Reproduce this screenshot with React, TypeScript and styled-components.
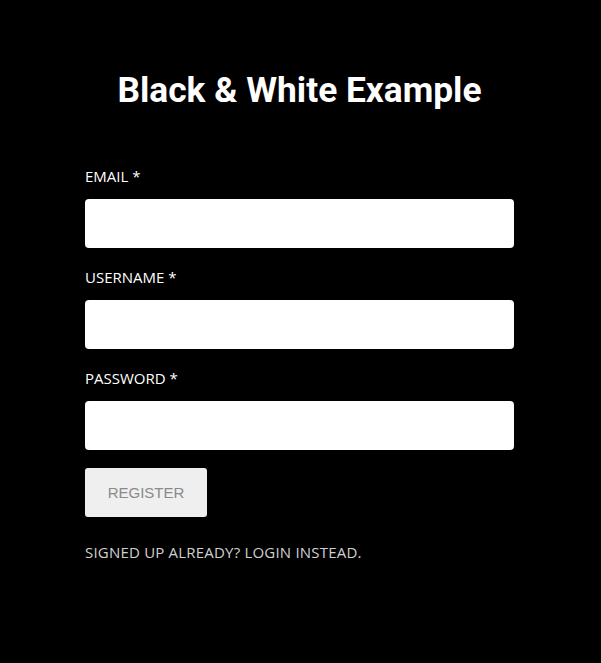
import React, { FC } from "react";
import styled, { createGlobalStyle } from "styled-components";

const GlobalStyle = createGlobalStyle`
  html, body {
    margin: 0;
    padding: 0;
    background: #000;
  }
  body {
    font-family: "Open Sans", "Liberation Sans", sans-serif;
  }
`;

const Page = styled.div`
  min-height: 663px;
  background: #000;
  display: flex;
  justify-content: center;
  padding-right: 2px;
`;

const Form = styled.form`
  width: 429px;
  padding-top: 70px;
  display: flex;
  flex-direction: column;
`;

const Title = styled.h1`
  margin: 0 0 56px;
  font-family: Roboto, "Liberation Sans", sans-serif;
  font-weight: 700;
  font-size: 35.3px;
  line-height: 40px;
  color: #fff;
  text-align: center;
`;

const Field = styled.div`
  display: flex;
  flex-direction: column;
  margin-bottom: 19px;
`;

const Label = styled.label`
  font-size: 15px;
  line-height: 20px;
  color: #fff;
  margin-bottom: 13px;
`;

const Input = styled.input`
  box-sizing: border-box;
  height: 49px;
  width: 100%;
  border: none;
  border-radius: 4px;
  background: #fff;
  padding: 0 12px;
  font-size: 16px;
  outline: none;
`;

const Button = styled.button`
  align-self: flex-start;
  width: 122px;
  height: 49px;
  margin-top: -1px;
  border: none;
  border-radius: 3px;
  background: #efefef;
  color: #8a8a8a;
  font-family: Arial, "Liberation Sans", sans-serif;
  font-size: 15px;
  cursor: pointer;
`;

const SwitchLink = styled.a`
  margin-top: 25px;
  font-size: 15px;
  line-height: 20px;
  letter-spacing: 0.2px;
  color: #d0d0d0;
  text-decoration: none;
  cursor: pointer;
`;

const fields = [
  { id: "email", label: "EMAIL", type: "email" },
  { id: "username", label: "USERNAME", type: "text" },
  { id: "password", label: "PASSWORD", type: "password" },
];

const App: FC = () => {
  return (
    <>
      <GlobalStyle />
      <Page>
        <Form onSubmit={(e) => e.preventDefault()}>
          <Title>Black &amp; White Example</Title>
          {fields.map((f) => (
            <Field key={f.id}>
              <Label htmlFor={f.id}>{f.label} *</Label>
              <Input id={f.id} type={f.type} />
            </Field>
          ))}
          <Button type="submit">REGISTER</Button>
          <SwitchLink>SIGNED UP ALREADY? LOGIN INSTEAD.</SwitchLink>
        </Form>
      </Page>
    </>
  );
};

export default App;
